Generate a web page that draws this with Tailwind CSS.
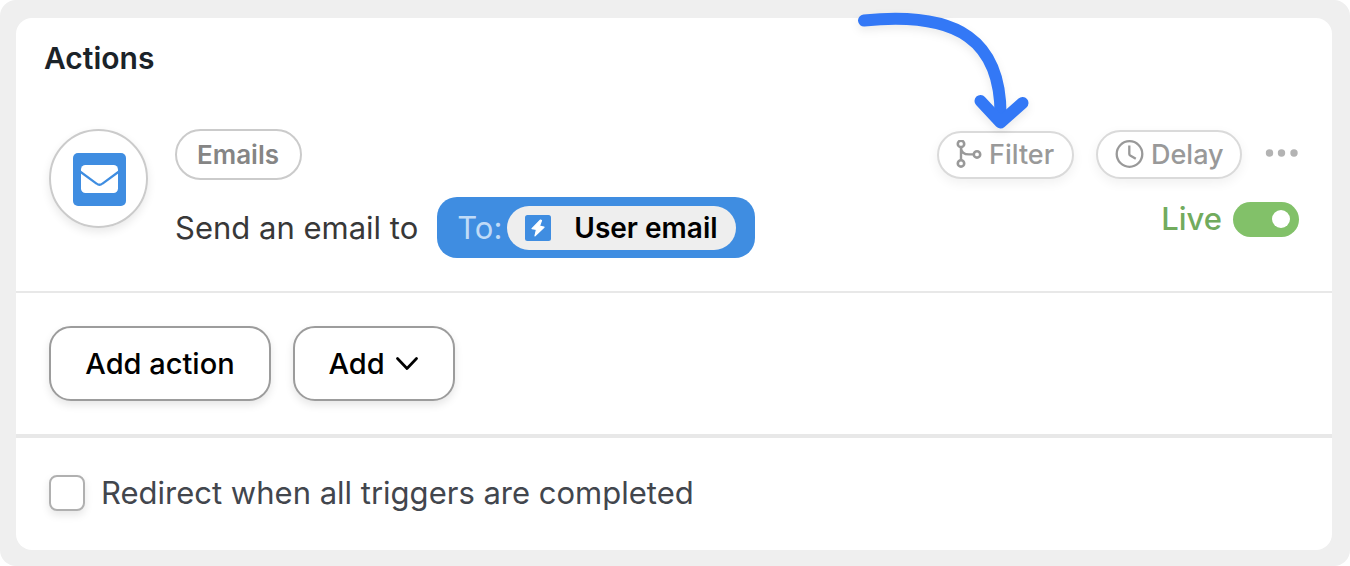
<!DOCTYPE html>
<html lang="en">
<head>
<meta charset="utf-8">
<meta name="viewport" content="width=device-width, initial-scale=1">
<title>Actions</title>
<script src="https://cdn.jsdelivr.net/npm/@tailwindcss/browser@4"></script>
</head>
<body class="bg-white font-['Inter',sans-serif]">
<div class="relative min-h-screen rounded-2xl bg-[#efefef] pt-[18px] pr-[18px] pb-4 pl-4">
  <main class="rounded-2xl bg-white">
    <h1 class="px-7 pt-5 pb-[18px] text-[30px] leading-10 font-semibold text-[#1b2329]">Actions</h1>

    <section class="flex justify-between border-b-2 border-[#e8e8e8] px-[33px] py-[33px]">
      <div class="flex gap-[27px]">
        <div class="flex size-[99px] shrink-0 items-center justify-center rounded-full border-2 border-[#cbcbcb] pt-0.5 pl-0.5 shadow-[0_4px_10px_rgba(0,0,0,0.09)]">
          <svg class="size-[53px]" viewBox="0 0 53 53" aria-hidden="true">
            <rect width="53" height="53" rx="5" fill="#3f8de1"/>
            <rect x="8" y="12" width="37" height="28" rx="4.500" fill="#fff"/>
            <path d="M7 18.500 L23.500 30.500 Q26.500 33 29.500 30.500 L46 18.500" fill="none" stroke="#3f8de1" stroke-width="2.200"/>
          </svg>
        </div>
        <div class="flex flex-col items-start gap-[17px]">
          <span class="flex h-[51px] items-center rounded-full border-2 border-[#cbcbcb] pr-[21px] pl-5 text-[26px] leading-9 font-semibold text-[#858585]">Emails</span>
          <p class="flex items-center gap-[19px] text-[31px] leading-10 whitespace-nowrap text-[#383838]">
            Send an email to
            <span class="flex h-[61px] items-center gap-[5px] rounded-[20px] bg-[#3f8de1] pr-[19px] pl-5 text-[#c0dbf7]">
              To:
              <span class="flex h-11 items-center rounded-full bg-[#eeeeee] px-[18px] text-[28px] font-semibold text-black">
                <svg class="mr-[23px] size-[26px]" viewBox="0 0 26 26" aria-hidden="true">
                  <rect width="26" height="26" rx="2.500" fill="#3f8de1"/>
                  <path d="M15.500 5 L7 13.600 L11.500 14.400 L10 20.800 L19 12.200 L14.400 11.200 L16.500 5.500 Z" fill="#fff" stroke="#fff" stroke-width="1.200" stroke-linejoin="round"/>
                </svg>
                User email
              </span>
            </span>
          </p>
        </div>
      </div>

      <div class="flex flex-col items-end gap-5 pt-px">
        <div class="flex items-center gap-[22px] text-[27px] leading-9 font-medium text-[#999]">
          <button type="button" class="flex h-12 w-[137px] items-center rounded-full border-2 border-[#dadada] bg-white pl-4 shadow-[0_4px_12px_rgba(0,0,0,0.06)]">
            <svg class="mr-[7px] h-[30px] w-[27px] shrink-0" viewBox="0 0 27 30" fill="none" stroke="#999" aria-hidden="true">
              <circle cx="6" cy="3.900" r="3.200" stroke-width="2.600"/>
              <circle cx="6" cy="23.400" r="3.200" stroke-width="2.600"/>
              <circle cx="22" cy="14.400" r="3.200" stroke-width="2.600"/>
              <path d="M6 7.400 V20.400 M6 7.400 C6 12.400 9 14.400 14 14.400 H18.500" stroke-width="2.400"/>
            </svg>
            Filter
          </button>
          <button type="button" class="flex h-[49px] w-[146px] items-center rounded-full border-2 border-[#dadada] bg-white pl-[17px] shadow-[0_4px_12px_rgba(0,0,0,0.06)]">
            <svg class="mr-[7px] size-[29px] shrink-0" viewBox="0 0 29 29" fill="none" stroke="#999" stroke-width="2.300" aria-hidden="true">
              <circle cx="14.500" cy="14" r="12.800"/>
              <path d="M14.300 5.500 V14 Q14.300 15 15.200 15.500 L20.800 18.700"/>
            </svg>
            Delay
          </button>
          <button type="button" aria-label="More options" class="pb-1">
            <svg class="h-2 w-[35px]" viewBox="0 0 35 8" fill="#b3b3b3" aria-hidden="true"><circle cx="5.500" cy="4" r="3.700"/><circle cx="17.500" cy="4" r="3.700"/><circle cx="30" cy="4" r="3.700"/></svg>
          </button>
        </div>
        <label class="flex items-center gap-[11px] text-[31px] leading-10 font-medium text-[#72ab5d]">
          Live
          <input type="checkbox" role="switch" checked class="flex h-[35px] w-[66px] appearance-none items-center justify-end rounded-full bg-[#82c169] pr-[9px] before:size-[18px] before:rounded-full before:bg-white">
        </label>
      </div>
    </section>

    <section class="flex gap-[22px] border-b-4 border-[#e8e8e8] px-[33px] py-[33px] text-[29px] leading-9 font-medium text-black">
      <button type="button" class="h-[75px] w-[222px] rounded-[22px] border-2 border-[#9c9c9c] bg-white shadow-[0_4px_8px_rgba(0,0,0,0.1)]">Add action</button>
      <button type="button" class="flex h-[75px] w-[162px] items-center justify-center gap-[11px] rounded-[22px] border-2 border-[#9c9c9c] bg-white pr-0.5 shadow-[0_4px_8px_rgba(0,0,0,0.1)]">
        Add
        <svg class="h-3.5 w-[22px]" viewBox="0 0 22 14" fill="none" stroke="#000" stroke-width="2.700" stroke-linecap="round" stroke-linejoin="round" aria-hidden="true"><path d="M1.500 1.500 L11 11.500 L20.500 1.500"/></svg>
      </button>
    </section>

    <label class="flex items-center gap-4 px-[33px] pt-[35px] pb-[37px] text-[31px] leading-10 text-[#42464d]">
      <input type="checkbox" class="size-9 shrink-0 appearance-none rounded-lg border-2 border-[#b0b0b0] bg-white shadow-[0_4px_8px_rgba(0,0,0,0.1)]">
      Redirect when all triggers are completed
    </label>
  </main>

  <!-- Callout arrow pointing at the Filter button -->
  <svg class="pointer-events-none absolute top-0 right-[310px] h-[140px] w-[190px] drop-shadow-[0_4px_4px_rgba(0,0,0,0.08)]" viewBox="850 0 190 140" fill="none" stroke="#3378f6" stroke-width="12" stroke-linecap="round" stroke-linejoin="round" aria-hidden="true">
    <path d="M864 20.500 C958 11 1003 40 1000.500 121"/>
    <path d="M980.500 101 L1000.500 122.500 L1022.500 103"/>
  </svg>
</div>
</body>
</html>
